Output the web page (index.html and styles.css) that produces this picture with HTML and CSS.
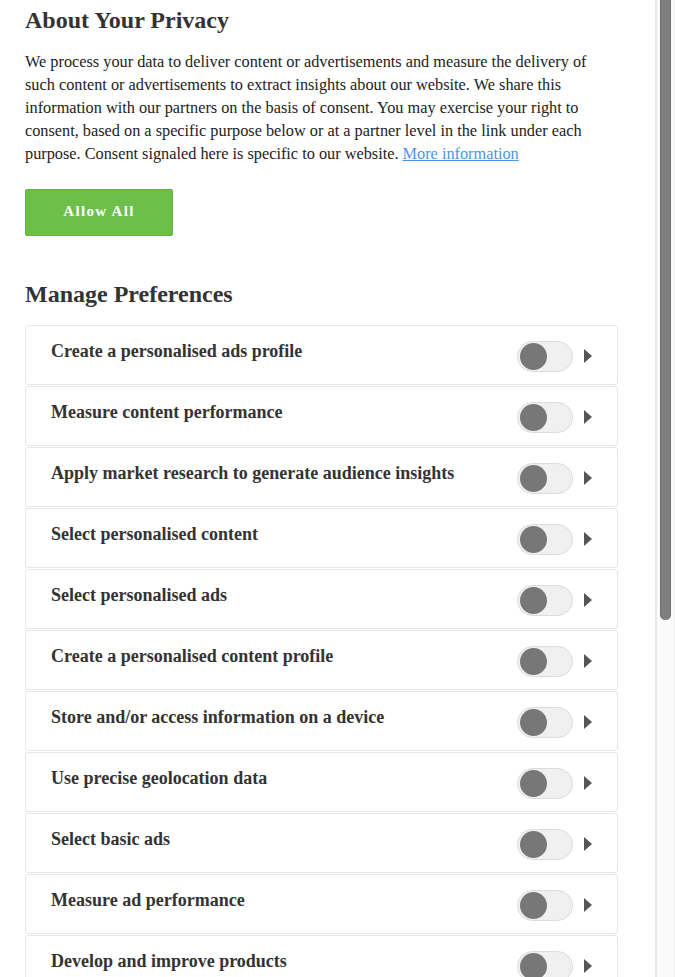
FILE: index.html
```html
<!DOCTYPE html>
<html lang="en">
<head>
<meta charset="utf-8">
<title>About Your Privacy</title>
<link rel="stylesheet" href="styles.css">
</head>
<body>
<main class="panel">
  <h1 class="title">About Your Privacy</h1>
  <p class="intro">We process your data to deliver content or advertisements and measure the delivery of such content or advertisements to extract insights about our website. We share this information with our partners on the basis of consent. You may exercise your right to consent, based on a specific purpose below or at a partner level in the link under each purpose. Consent signaled here is specific to our website. <a class="link" href="#">More information</a></p>
  <button class="allow" type="button">Allow All</button>
  <h2 class="title title-prefs">Manage Preferences</h2>
  <ul class="prefs">
    <li class="pref"><span class="pref-name">Create a personalised ads profile</span><span class="toggle"><span class="knob"></span></span><span class="arrow"></span></li>
    <li class="pref"><span class="pref-name">Measure content performance</span><span class="toggle"><span class="knob"></span></span><span class="arrow"></span></li>
    <li class="pref"><span class="pref-name">Apply market research to generate audience insights</span><span class="toggle"><span class="knob"></span></span><span class="arrow"></span></li>
    <li class="pref"><span class="pref-name">Select personalised content</span><span class="toggle"><span class="knob"></span></span><span class="arrow"></span></li>
    <li class="pref"><span class="pref-name">Select personalised ads</span><span class="toggle"><span class="knob"></span></span><span class="arrow"></span></li>
    <li class="pref"><span class="pref-name">Create a personalised content profile</span><span class="toggle"><span class="knob"></span></span><span class="arrow"></span></li>
    <li class="pref"><span class="pref-name">Store and/or access information on a device</span><span class="toggle"><span class="knob"></span></span><span class="arrow"></span></li>
    <li class="pref"><span class="pref-name">Use precise geolocation data</span><span class="toggle"><span class="knob"></span></span><span class="arrow"></span></li>
    <li class="pref"><span class="pref-name">Select basic ads</span><span class="toggle"><span class="knob"></span></span><span class="arrow"></span></li>
    <li class="pref"><span class="pref-name">Measure ad performance</span><span class="toggle"><span class="knob"></span></span><span class="arrow"></span></li>
    <li class="pref"><span class="pref-name">Develop and improve products</span><span class="toggle"><span class="knob"></span></span><span class="arrow"></span></li>
  </ul>
</main>
<div class="scrollbar"><div class="thumb"></div></div>
</body>
</html>
```
FILE: styles.css
```css
html, body {
  margin: 0;
  padding: 0;
  background: #fff;
  overflow: hidden;
  height: 977px;
}
body {
  font-family: "Liberation Serif", "Times New Roman", serif;
  color: #333;
}
.panel {
  width: 593px;
  padding: 0 0 0 25px;
}
.title {
  margin: 6px 0 0;
  font-size: 24px;
  line-height: 28px;
  font-weight: bold;
  color: #333;
}
.intro {
  margin: 16px 0 0;
  font-size: 16.3px;
  line-height: 23px;
  color: #222;
}
.link {
  color: #4a95e6;
  text-decoration: underline;
}
.allow {
  display: block;
  margin-top: 24px;
  width: 148px;
  height: 47px;
  border: 1px solid #62b83f;
  border-radius: 2px;
  background: #6cc04a;
  color: #fff;
  font-family: "Liberation Serif", "Times New Roman", serif;
  font-size: 15px;
  font-weight: bold;
  letter-spacing: 1.3px;
  padding: 0 0 2px;
}
.title-prefs {
  margin-top: 44px;
}
.prefs {
  list-style: none;
  margin: 17px 0 0;
  padding: 0;
}
.pref {
  display: flex;
  align-items: center;
  box-sizing: border-box;
  height: 60px;
  margin-bottom: 1px;
  padding: 0 25px 0 25px;
  border: 1px solid #e6e6e6;
  border-radius: 3px;
}
.pref-name {
  flex: 1;
  font-size: 18px;
  line-height: 20px;
  font-weight: bold;
  color: #333;
  padding-bottom: 9px;
}
.toggle {
  position: relative;
  box-sizing: border-box;
  width: 56px;
  height: 31px;
  margin-top: 3px;
  border: 1px solid #dcdcdc;
  border-radius: 16px;
  background: #f0f0f0;
}
.knob {
  position: absolute;
  left: 2px;
  top: 1px;
  width: 27px;
  height: 27px;
  border-radius: 50%;
  background: #777;
}
.arrow {
  width: 0;
  height: 0;
  margin-left: 11px;
  margin-top: 1px;
  border-top: 7px solid transparent;
  border-bottom: 7px solid transparent;
  border-left: 8px solid #555;
}
.scrollbar {
  position: fixed;
  top: 0;
  right: 0;
  width: 17px;
  height: 977px;
  background: #fafafa;
  border-left: 2px solid #e8e8e8;
  border-right: 1px solid #efefef;
}
.thumb {
  margin: 0 0 0 3px;
  width: 11px;
  height: 620px;
  background: #7f7f7f;
  border-radius: 0 0 6px 6px;
  border-left: 1px solid #6e6e6e;
  border-right: 1px solid #6e6e6e;
  box-sizing: border-box;
}
```
